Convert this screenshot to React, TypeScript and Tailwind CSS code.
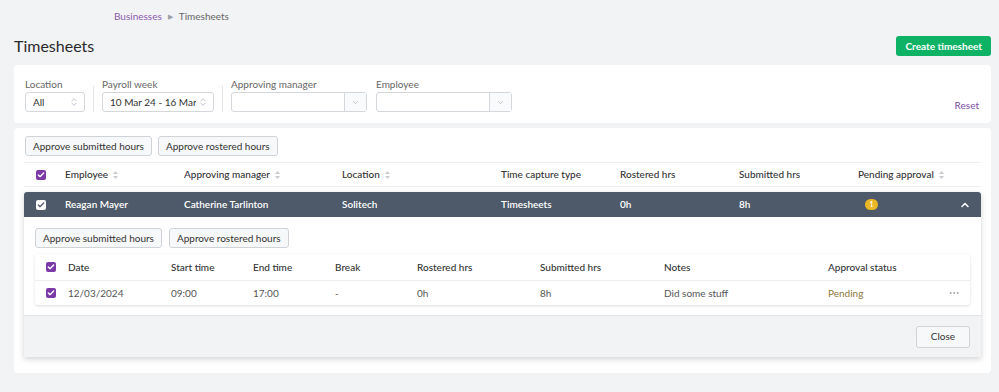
import { ChevronDown, ChevronUp, ChevronsUpDown, Check, MoreHorizontal } from 'lucide-react';

const SortIcon = () => (
  <svg width="7" height="10" viewBox="0 0 7 10" className="ml-1 inline-block">
    <path d="M3.5 1 L6 4 H1 Z" fill="#c9cdd2" />
    <path d="M3.5 9 L6 6 H1 Z" fill="#c9cdd2" />
  </svg>
);

const Checkbox = ({ light }: { light?: boolean }) =>
  light ? (
    <span className="flex h-[10px] w-[10px] items-center justify-center rounded-[2px] bg-white">
      <Check className="h-[8px] w-[8px] text-[#4e5a6a]" strokeWidth={4} />
    </span>
  ) : (
    <span className="flex h-[10px] w-[10px] items-center justify-center rounded-[2px] bg-[#7c3aa6]">
      <Check className="h-[8px] w-[8px] text-white" strokeWidth={4} />
    </span>
  );

const Btn = ({ children }: { children: React.ReactNode }) => (
  <button className="h-[20px] rounded-[3px] border border-[#cfd3d8] bg-[#f7f8f9] px-[7px] text-[10px] leading-none text-[#333]">
    {children}
  </button>
);

const NativeSelect = ({ value, w }: { value: string; w: string }) => (
  <div className={`flex h-[20px] items-center justify-between rounded-[3px] border border-[#d4d8dc] bg-white pl-[7px] pr-[5px] text-[10px] text-[#333] ${w}`}>
    <span className="overflow-hidden whitespace-nowrap">{value}</span>
    <ChevronsUpDown className="ml-[2px] h-[10px] w-[10px] shrink-0 text-[#9aa0a6]" strokeWidth={1.5} />
  </div>
);

const Combo = () => (
  <div className="flex h-[20px] w-[136px] rounded-[3px] border border-[#d4d8dc] bg-white">
    <div className="flex-1" />
    <div className="flex w-[22px] items-center justify-center border-l border-[#d4d8dc] bg-[#f9fafb]">
      <ChevronDown className="h-[9px] w-[9px] text-[#9aa0a6]" strokeWidth={1.5} />
    </div>
  </div>
);

const mainCols = 'grid grid-cols-[40px_119px_158px_159px_119px_119px_119px_1fr] items-center';
const subCols = 'grid grid-cols-[33px_103px_82px_82px_82px_123px_124px_164px_1fr] items-center';

export default function App() {
  return (
    <div className="min-h-[392px] bg-[#f2f3f5] pl-[14px] pr-[8px] pt-[9px] font-['Lato',sans-serif] text-[#333]">
      {/* Breadcrumb */}
      <div className="flex h-[14px] items-center gap-[6px] pl-[100px] text-[10px] leading-[14px]">
        <span className="text-[#8b5aae]">Businesses</span>
        <span className="text-[7px] text-[#9a9fa6]">▶</span>
        <span className="text-[#666]">Timesheets</span>
      </div>

      {/* Header */}
      <div className="mt-[13px] flex h-[20px] items-center justify-between">
        <h1 className="text-[16px] leading-[20px] text-[#2b2b2b]">Timesheets</h1>
        <button className="h-[20px] rounded-[3px] bg-[#0db265] px-[9px] text-[10px] font-bold leading-none text-white">
          Create timesheet
        </button>
      </div>

      {/* Filters */}
      <div className="mt-[9px] flex h-[58px] items-end justify-between rounded-[4px] bg-white px-[11px] pb-[11px]">
        <div className="flex items-stretch">
          <div className="pr-[8px]">
            <div className="mb-[1px] text-[10px] leading-[14px] text-[#666]">Location</div>
            <NativeSelect value="All" w="w-[60px]" />
          </div>
          <div className="mt-[9px] w-px bg-[#e3e5e8]" />
          <div className="pl-[8px] pr-[8px]">
            <div className="mb-[1px] text-[10px] leading-[14px] text-[#666]">Payroll week</div>
            <NativeSelect value="10 Mar 24 - 16 Mar 2" w="w-[112px]" />
          </div>
          <div className="mt-[9px] w-px bg-[#e3e5e8]" />
          <div className="pl-[8px] pr-[9px]">
            <div className="mb-[1px] text-[10px] leading-[14px] text-[#666]">Approving manager</div>
            <Combo />
          </div>
          <div>
            <div className="mb-[1px] text-[10px] leading-[14px] text-[#666]">Employee</div>
            <Combo />
          </div>
        </div>
        <span className="pr-[1px] text-[10px] leading-[14px] text-[#7d4fa8]">Reset</span>
      </div>

      {/* Main */}
      <div className="mt-[5px] rounded-[4px] bg-white px-[10px] pb-[16px] pt-[8px]">
        <div className="flex gap-[6px] pl-[1px]">
          <Btn>Approve submitted hours</Btn>
          <Btn>Approve rostered hours</Btn>
        </div>
        <div className={`${mainCols} mt-[6px] h-[25px] border-y border-[#eceef0] pl-[1px] text-[10px] font-medium text-[#333]`}>
          <span className="pl-[11px]"><Checkbox /></span>
          <span>Employee<SortIcon /></span>
          <span>Approving manager<SortIcon /></span>
          <span>Location<SortIcon /></span>
          <span>Time capture type</span>
          <span>Rostered hrs</span>
          <span>Submitted hrs</span>
          <span>Pending approval<SortIcon /></span>
        </div>

        <div className="mt-[5px] shadow-[0_2px_6px_rgba(0,0,0,0.18)]">
          <div className={`${mainCols} h-[25px] rounded-t-[3px] bg-[#4e5a6a] pl-[1px] text-[10px] font-semibold text-white`}>
            <span className="pl-[11px]"><Checkbox light /></span>
            <span>Reagan Mayer</span>
            <span>Catherine Tarlinton</span>
            <span>Solitech</span>
            <span>Timesheets</span>
            <span>0h</span>
            <span>8h</span>
            <span className="flex items-center justify-between pl-[7px] pr-[10px]">
              <span className="flex h-[11px] w-[13px] items-center justify-center rounded-full bg-[#e9b824] text-[7px] text-white">1</span>
              <ChevronUp className="h-[12px] w-[12px] text-white" strokeWidth={3} />
            </span>
          </div>

          <div className="bg-white px-[11px] pb-[10px] pt-[11px]">
            <div className="flex gap-[7px]">
              <Btn>Approve submitted hours</Btn>
              <Btn>Approve rostered hours</Btn>
            </div>
            <div className="mt-[6px] rounded-[3px] shadow-[0_1px_3px_rgba(0,0,0,0.14)]">
              <div className={`${subCols} h-[27px] border-b border-[#eceef0] text-[10px] font-medium text-[#333]`}>
                <span className="pl-[11px]"><Checkbox /></span>
                <span>Date</span>
                <span>Start time</span>
                <span>End time</span>
                <span>Break</span>
                <span>Rostered hrs</span>
                <span>Submitted hrs</span>
                <span>Notes</span>
                <span>Approval status</span>
              </div>
              <div className={`${subCols} h-[24px] text-[10px] text-[#555]`}>
                <span className="pl-[11px]"><Checkbox /></span>
                <span>12/03/2024</span>
                <span>09:00</span>
                <span>17:00</span>
                <span>-</span>
                <span>0h</span>
                <span>8h</span>
                <span>Did some stuff</span>
                <span className="flex items-center justify-between pr-[10px]">
                  <span className="text-[#8e7a3c]">Pending</span>
                  <MoreHorizontal className="h-[12px] w-[12px] text-[#9aa0a6]" />
                </span>
              </div>
            </div>
          </div>

          <div className="flex h-[42px] items-center justify-end border-t border-[#e1e3e6] bg-[#f2f3f5] pr-[11px]">
            <button className="h-[22px] w-[54px] rounded-[3px] border border-[#cfd3d8] bg-[#f7f8f9] text-[10px] text-[#333]">
              Close
            </button>
          </div>
        </div>
      </div>
    </div>
  );
}
